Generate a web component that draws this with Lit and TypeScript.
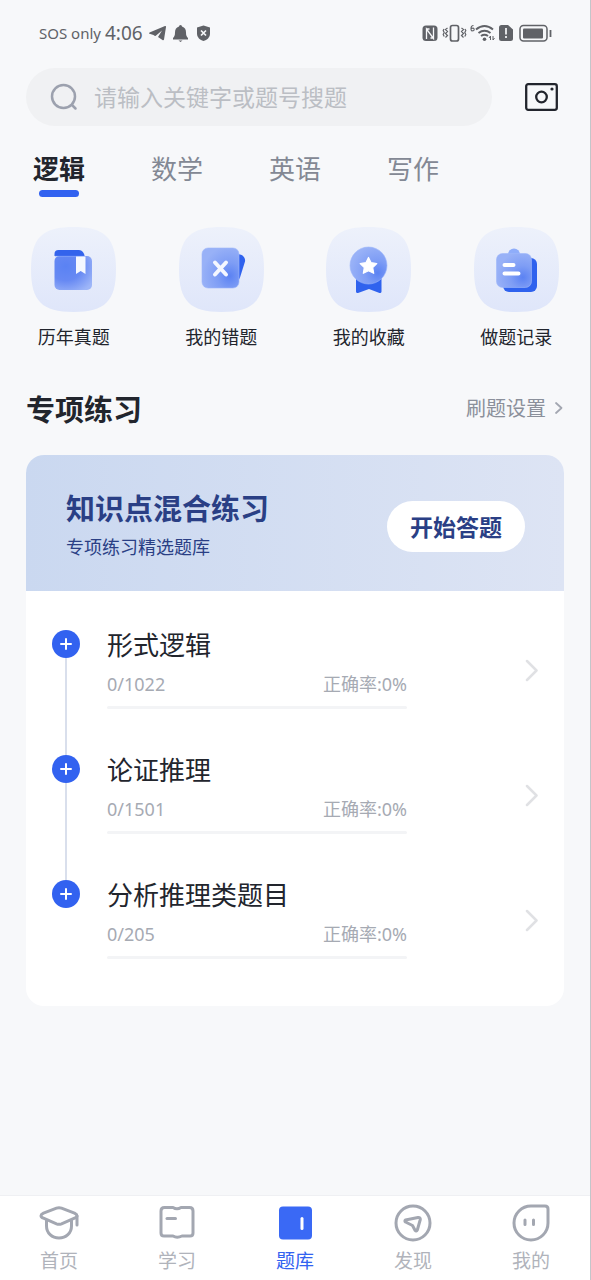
import { LitElement, html, svg, css } from "lit";
import { customElement, property, state } from "lit/decorators.js";
import { classMap } from "lit/directives/class-map.js";

const features = [
  {
    label: "历年真题",
    art: svg`
      <rect x="23.500" y="29" width="37.500" height="34" rx="5" fill="url(#glassLeft)"/>
      <path d="M23.500 29v-2a4 4 0 0 1 4-4h20.500a6 6 0 0 1 5.500 6z" fill="#3363ec"/>
      <path d="M24 29.300h29" stroke="#8fadfa" stroke-width=".6"/>
      <path d="M45 29.500h9.500v17.500l-4.800-3-4.700 3z" fill="#f4f7ff"/>`,
  },
  {
    label: "我的错题",
    art: svg`
      <path d="M50 25l11 2.500a6 6 0 0 1 5 7l-5 16a5 5 0 0 1-3 3.500H50z" fill="#2f62ee"/>
      <rect x="23" y="21" width="37" height="40" rx="6" fill="url(#glassRight)" stroke="#9db7fa" stroke-width=".6"/>
      <path d="M36 35.500l11 12M47 35.500l-11 12" stroke="#f4f7ff" stroke-width="4" stroke-linecap="round"/>`,
  },
  {
    label: "我的收藏",
    art: svg`
      <path d="M30 50h25.500v14.500a1.500 1.500 0 0 1-2 1.500l-10.500-4-11 4a1.500 1.500 0 0 1-2-1.500z" fill="#2f62ee"/>
      <circle cx="42.500" cy="38.500" r="18.500" fill="url(#glassRight)" stroke="#9db7fa" stroke-width=".6"/>
      <path d="M42.500 30.500l2.600 5.200 5.700.8-4.100 4.100 1 5.700-5.200-2.600-5.200 2.600 1-5.700-4.100-4.100 5.700-.8z" fill="#fff" stroke="#fff" stroke-width="1.200" stroke-linejoin="round"/>`,
  },
  {
    label: "做题记录",
    art: svg`
      <rect x="29" y="31" width="34" height="34" rx="6" fill="#2f62ee"/>
      <circle cx="40" cy="27.500" r="6" fill="#8fadfa"/>
      <rect x="22.500" y="26.500" width="35" height="34" rx="6" fill="url(#glassRight)" stroke="#9db7fa" stroke-width=".6"/>
      <path d="M30.500 38h9M30.500 46.500h14" stroke="#fff" stroke-width="4" stroke-linecap="round"/>`,
  },
];

const topics = [
  { title: "形式逻辑", done: 0, total: 1022, rate: 0 },
  { title: "论证推理", done: 0, total: 1501, rate: 0 },
  { title: "分析推理类题目", done: 0, total: 205, rate: 0 },
];

const navItems = [
  {
    label: "首页",
    art: svg`
      <path d="M17.500 5.200q2.500-1 5 0l13 4.900q2.500 1.200 2.500 2.600 0 1.500-2.500 2.500l-13 5.600q-2.500 1-5 0l-13-5.600Q2 14.200 2 12.700q0-1.400 2.500-2.600z"/>
      <path d="M7.500 17.500v5.500c0 7 5.500 12 12.500 12s12.500-5 12.500-12v-5.500M38 13v9"/>`,
  },
  {
    label: "学习",
    art: svg`
      <path d="M4 8q0-3.500 3.500-3.500h8.500q4 2.500 8 0h8.500Q36 4.500 36 8v22q0 3-3 3h-8q-5 2.500-9 0H7q-3 0-3-3z"/>
      <path d="M10 15.500h8.500"/>`,
  },
  {
    label: "题库",
    art: svg`
      <rect x="4" y="3.500" width="33" height="33" rx="4" fill="#3a69f5" stroke="none"/>
      <path d="M27 15.500v10" stroke="#fff"/>`,
  },
  {
    label: "发现",
    art: svg`
      <circle cx="20" cy="20" r="17"/>
      <path d="M12.500 19q-1.200-1 0-2l12.500-2.500q2.500-.3 2.300 2l-3 10.500q-1 1.800-2.300.3l-2.500-4.800z"/>`,
  },
  {
    label: "我的",
    art: svg`
      <path d="M20 3h14q3 0 3 3v14a17 17 0 1 1-17-17z"/>
      <path d="M14 17v4.500M22.500 17v4.500"/>`,
  },
];

@customElement("status-bar")
export class StatusBar extends LitElement {
  static styles = css`
    :host {
      display: flex;
      justify-content: space-between;
      align-items: center;
      height: 68px;
      padding: 0 38px 2px 39px;
      box-sizing: border-box;
      color: #606267;
      font-family: "Noto Sans", sans-serif;
    }
    .group { display: flex; align-items: center; gap: 4px; }
    .carrier { font-size: 15px; }
    .time { font-size: 19px; }
    svg { display: block; }
  `;

  render() {
    return html`
      <div class="group">
        <span class="carrier">SOS only</span>
        <span class="time">4:06</span>
        <svg width="64" height="20" viewBox="0 0 64 20" fill="currentColor">
          <path d="M2.500 9.500L18 3q1.200-.3 1 1l-2 12.500q-.4 1.200-1.500.6L11 14l4-6.500L8.500 13q-1 0-2-1l-4-1.200q-1-.6 0-1.300z"/>
          <path d="M33.500 2a1.500 1.500 0 0 1 1.500 1.500c3 1 4 3 4 6 0 3 .6 4 2 5.500v1.500H26V15c1.400-1.500 2-2.500 2-5.500 0-3 1-5 4-6A1.500 1.500 0 0 1 33.500 2zM31.500 17.500h4l-2 1.500z"/>
          <path d="M56.500 2.500l6.500 2v6c0 4-3 6.500-6.500 7.500-3.500-1-6.500-3.500-6.500-7.500v-6z"/>
          <path d="M54 7.500l5 5M59 7.500l-5 5" stroke="#f7f8fa" stroke-width="1.700"/>
        </svg>
      </div>
      <svg width="131" height="22" viewBox="0 0 131 22" fill="none" stroke="currentColor">
        <rect x="1.500" y="3.500" width="15" height="15.500" rx="3.500" fill="currentColor" stroke="none"/>
        <path d="M5.500 17V7l7 9.500V5.500M5.500 7h3M9.500 16h3" stroke="#f7f8fa" stroke-width="1.300"/>
        <rect x="29.500" y="3.500" width="8" height="15.500" rx="2" stroke-width="1.700"/>
        <path d="M26.500 6l-2 1.500 2 2-2 2 2 2-2 2M23 7l-.8 1.500 1 2-1 2 1 2M40.500 6l2 1.500-2 2 2 2-2 2 2 2M44 7l.8 1.500-1 2 1 2-1 2" stroke-width="1.200"/>
        <path d="M52.500 3.500q-2.500 0-2.500 3t1.500 2.200q2 0 1.600-1.700-.5-1.500-2.600-.5" stroke-width="1.100"/>
        <path d="M55 7.500q8.500-7 17 0M57.500 11q6-4.500 12 0M60 14q3.500-2.500 7 0" stroke-width="2"/>
        <circle cx="63.500" cy="17.200" r="1.800" fill="currentColor" stroke="none"/>
        <path d="M69.500 18v-4l-1.500 2M72 14v4l1.500-2" stroke-width="1"/>
        <path d="M80.500 3H87l5 4.500v9a2.500 2.500 0 0 1-2.500 2.500h-9a2.500 2.500 0 0 1-2.500-2.500v-11A2.500 2.500 0 0 1 80.500 3z" fill="currentColor" stroke="none"/>
        <path d="M85 6v6.500M85 14v2" stroke="#f7f8fa" stroke-width="1.700"/>
        <rect x="99" y="3.500" width="27" height="15.500" rx="3.500" stroke-width="1.500"/>
        <rect x="102" y="6.500" width="20" height="10" rx="1" fill="currentColor" stroke="none"/>
        <path d="M129.500 8v7" stroke-width="1.800"/>
      </svg>
    `;
  }
}

@customElement("topic-row")
export class TopicRow extends LitElement {
  @property({ attribute: false }) topic = topics[0];
  @property({ type: Boolean }) last = false;

  static styles = css`
    :host { display: flex; gap: 27px; }
    .rail { display: flex; flex-direction: column; align-items: center; flex: none; }
    .expand {
      display: block;
      width: 28px;
      height: 28px;
      padding: 0;
      border: 0;
      border-radius: 50%;
      background: #3262f0;
      cursor: pointer;
    }
    .line { flex: 1; width: 2px; background: #d9dfec; }
    .entry {
      flex: 1;
      display: flex;
      align-items: center;
      justify-content: space-between;
      gap: 24px;
      padding-bottom: 46px;
      color: inherit;
      text-decoration: none;
    }
    .entry.last { padding-bottom: 0; }
    .info { flex: 0 1 300px; }
    .title { margin: 0; font-size: 26px; line-height: 28px; font-weight: 400; color: #22252d; }
    .stats {
      display: flex;
      justify-content: space-between;
      margin: 13px 0 9px;
      font-family: "Noto Sans", "Noto Sans CJK SC", sans-serif;
      font-size: 18px;
      line-height: 26px;
      color: #a6aab3;
    }
    .track { height: 3px; border-radius: 2px; background: #f3f4f6; overflow: hidden; }
    .fill { height: 100%; background: #3262f0; }
    svg { display: block; flex: none; }
  `;

  render() {
    const { title, done, total, rate } = this.topic;
    return html`
      <div class="rail">
        <button class="expand" aria-label="展开">
          <svg width="28" height="28" viewBox="0 0 28 28"><path d="M14 9v10M9 14h10" stroke="#fff" stroke-width="2" stroke-linecap="round"/></svg>
        </button>
        ${this.last ? "" : html`<div class="line"></div>`}
      </div>
      <a class=${classMap({ entry: true, last: this.last })} href="#">
        <div class="info">
          <h3 class="title">${title}</h3>
          <div class="stats"><span>${done}/${total}</span><span>正确率:${rate}%</span></div>
          <div class="track"><div class="fill" style="width:${(done / total) * 100}%"></div></div>
        </div>
        <svg width="13" height="24" viewBox="0 0 13 24"><path d="M2 3l9.500 9.500L2 22" fill="none" stroke="#e0e1e4" stroke-width="2.500" stroke-linecap="round" stroke-linejoin="round"/></svg>
      </a>
    `;
  }
}

@customElement("app-root")
export class AppRoot extends LitElement {
  @state() private subject = "逻辑";
  @state() private page = "题库";

  static styles = css`
    :host {
      display: flex;
      flex-direction: column;
      min-height: 100vh;
      box-sizing: border-box;
      border-right: 1px solid #c3c6ca;
      background: #f7f8fa;
      color: #22252d;
      font-family: "Noto Sans CJK SC", sans-serif;
    }
    button, input { font-family: inherit; }
    button { padding: 0; border: 0; background: none; color: inherit; cursor: pointer; }
    a { color: inherit; text-decoration: none; }
    svg { display: block; flex: none; }
    main { flex: 1; }

    .search { display: flex; align-items: center; gap: 33px; padding: 0 32px 0 26px; }
    .field {
      flex: 1;
      min-width: 0;
      display: flex;
      align-items: center;
      gap: 16px;
      height: 58px;
      padding: 0 24px;
      box-sizing: border-box;
      border-radius: 29px;
      background: #f0f1f3;
    }
    .field input {
      flex: 1;
      min-width: 0;
      padding: 0 0 2px;
      border: 0;
      outline: 0;
      background: none;
      font-size: 23px;
      line-height: 34px;
      color: #22252d;
    }
    .field input::placeholder { color: #bbbec4; opacity: 1; }

    .tabs { display: grid; grid-template-columns: repeat(5, 1fr); padding-top: 24px; }
    .tab {
      display: flex;
      flex-direction: column;
      align-items: center;
      gap: 4px;
      font-size: 26px;
      line-height: 36px;
      color: #838894;
    }
    .tab::after { content: ""; width: 40px; height: 7px; border-radius: 4px; }
    .tab.active { color: #22252d; font-weight: 700; }
    .tab.active::after { background: #3262f0; }

    .features { display: grid; grid-template-columns: repeat(4, 1fr); padding-top: 30px; }
    .feature {
      display: flex;
      flex-direction: column;
      align-items: center;
      gap: 12px;
      font-size: 18px;
      line-height: 24px;
    }

    .heading {
      display: flex;
      align-items: center;
      justify-content: space-between;
      padding: 39px 26px 26px;
    }
    .heading h2 { margin: 0; font-size: 29px; line-height: 42px; font-weight: 700; }
    .settings {
      display: flex;
      align-items: center;
      gap: 8px;
      font-size: 20px;
      line-height: 28px;
      color: #8b909b;
    }

    .card { margin: 0 26px 32px; border-radius: 18px; overflow: hidden; background: #fff; }
    .banner {
      display: flex;
      align-items: center;
      justify-content: space-between;
      padding: 32px 39px 32px 40px;
      background: linear-gradient(90deg, #cad8f0, #dde4f4);
      color: #2a3f85;
    }
    .banner h3 { margin: 0; font-size: 29px; line-height: 40px; font-weight: 700; }
    .banner p { margin: 6px 0 0; font-size: 18px; line-height: 26px; }
    .start {
      width: 138px;
      height: 51px;
      margin-top: 6px;
      border-radius: 26px;
      background: #fff;
      font-size: 23px;
      font-weight: 700;
    }
    .topics { padding: 39px 26px 47px; }

    nav {
      position: sticky;
      bottom: 0;
      display: grid;
      grid-template-columns: repeat(5, 1fr);
      height: 85px;
      box-sizing: border-box;
      padding-top: 7px;
      border-top: 1px solid #eff0f3;
      background: #fff;
    }
    .nav-item {
      display: flex;
      flex-direction: column;
      align-items: center;
      gap: 4px;
      font-size: 19px;
      line-height: 26px;
      color: #b0b3bb;
    }
    .nav-item.active { color: #3262f0; }
  `;

  private renderFeature(feature: (typeof features)[number]) {
    return html`
      <a class="feature" href="#">
        <svg width="85" height="85" viewBox="0 0 85 85" fill="none">
          <defs>
            <linearGradient id="tile" x1="0" y1="0" x2="0" y2="1">
              <stop offset="0" stop-color="#edf1fb"/><stop offset="1" stop-color="#dfe6fa"/>
            </linearGradient>
            <radialGradient id="glassLeft" cx=".3" cy=".3" r=".85">
              <stop offset="0" stop-color="#5a82f3"/><stop offset=".5" stop-color="#6789f3"/><stop offset="1" stop-color="#9db5f8"/>
            </radialGradient>
            <radialGradient id="glassRight" cx=".75" cy=".7" r=".75">
              <stop offset="0" stop-color="#5b82f3"/><stop offset=".45" stop-color="#7e9df5"/><stop offset="1" stop-color="#98b1f7"/>
            </radialGradient>
          </defs>
          <path d="M42.500 0C74 0 85 11 85 42.500S74 85 42.500 85 0 74 0 42.500 11 0 42.500 0z" fill="url(#tile)"/>
          ${feature.art}
        </svg>
        <span>${feature.label}</span>
      </a>
    `;
  }

  render() {
    return html`
      <status-bar></status-bar>
      <main>
        <div class="search">
          <label class="field">
            <svg width="28" height="28" viewBox="0 0 28 28" fill="none" stroke="#9ca1ae" stroke-width="2.500" stroke-linecap="round">
              <circle cx="13.500" cy="13.500" r="11.500"/><path d="M22 22l3.500 3.500"/>
            </svg>
            <input type="search" aria-label="搜索" placeholder="请输入关键字或题号搜题" />
          </label>
          <button aria-label="拍照搜题">
            <svg width="33" height="28" viewBox="0 0 33 28" fill="none" stroke="#22252d" stroke-width="2.300">
              <rect x="1.200" y="1.200" width="30.600" height="25.600" rx="2"/>
              <circle cx="16.500" cy="14" r="5.300"/>
              <circle cx="27" cy="6" r="1.600" fill="#22252d" stroke="none"/>
            </svg>
          </button>
        </div>

        <div class="tabs">
          ${["逻辑", "数学", "英语", "写作"].map(
            (name) => html`<button
              class=${classMap({ tab: true, active: name === this.subject })}
              @click=${() => (this.subject = name)}
            >${name}</button>`
          )}
        </div>

        <div class="features">${features.map((f) => this.renderFeature(f))}</div>

        <div class="heading">
          <h2>专项练习</h2>
          <a class="settings" href="#">
            <span>刷题设置</span>
            <svg width="10" height="14" viewBox="0 0 10 14"><path d="M2 2l5.500 5L2 12" fill="none" stroke="#a3a7b1" stroke-width="1.800" stroke-linecap="round" stroke-linejoin="round"/></svg>
          </a>
        </div>

        <section class="card">
          <div class="banner">
            <div>
              <h3>知识点混合练习</h3>
              <p>专项练习精选题库</p>
            </div>
            <button class="start">开始答题</button>
          </div>
          <div class="topics">
            ${topics.map(
              (t, i) => html`<topic-row .topic=${t} ?last=${i === topics.length - 1}></topic-row>`
            )}
          </div>
        </section>
      </main>

      <nav>
        ${navItems.map(
          (item) => html`<button
            class=${classMap({ "nav-item": true, active: item.label === this.page })}
            @click=${() => (this.page = item.label)}
          >
            <svg width="40" height="40" viewBox="0 0 40 40" fill="none" stroke="#a3a7b1" stroke-width="3" stroke-linecap="round" stroke-linejoin="round">${item.art}</svg>
            <span>${item.label}</span>
          </button>`
        )}
      </nav>
    `;
  }
}
